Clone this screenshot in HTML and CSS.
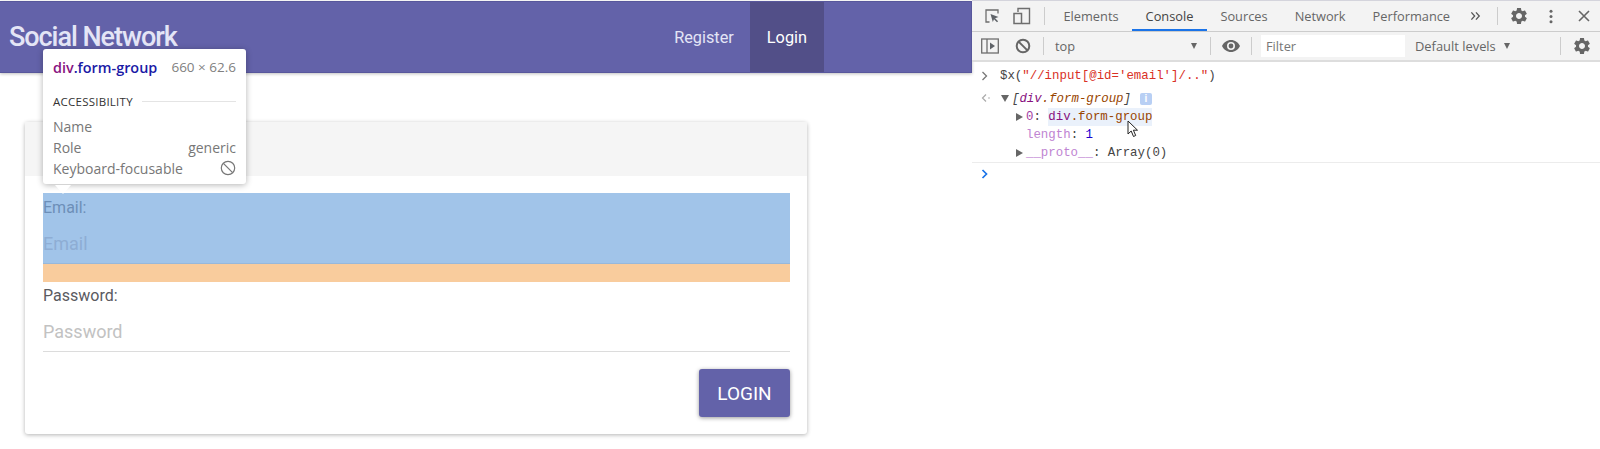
FILE: index.html
```html
<!DOCTYPE html>
<html lang="en">
<head>
<meta charset="utf-8">
<title>Social Network</title>
<link rel="stylesheet" href="styles.css">
</head>
<body>
<div class="screen">
  <main class="page">
    <header class="navbar">
      <div class="brand">Social Network</div>
      <nav class="nav">
        <a class="nav-link">Register</a>
        <a class="nav-link active">Login</a>
      </nav>
    </header>
    <section class="card">
      <div class="card-head"></div>
      <form class="card-body">
        <div class="form-group hl">
          <label class="label">Email:</label>
          <div class="input">Email</div>
        </div>
        <div class="hl-margin"></div>
        <div class="form-group pw">
          <label class="label">Password:</label>
          <div class="input underlined">Password</div>
        </div>
        <div class="actions"><button type="button" class="btn">LOGIN</button></div>
      </form>
    </section>
    <aside class="tip">
      <div class="tip-title"><span class="tip-name"><span class="t-tag">div</span><span class="t-cls">.form-group</span></span><span class="tip-size">660 × 62.6</span></div>
      <div class="tip-section"><span>ACCESSIBILITY</span><i class="tip-rule"></i></div>
      <div class="tip-row"><span>Name</span></div>
      <div class="tip-row"><span>Role</span><span>generic</span></div>
      <div class="tip-row"><span>Keyboard-focusable</span>
        <svg class="tip-icon" viewBox="0 0 16 16"><circle cx="8" cy="8" r="6.7" fill="none" stroke="#777" stroke-width="1.2"/><path d="M3.4 3.4l9.2 9.2" stroke="#777" stroke-width="1.2"/></svg>
      </div>
    </aside>
    <div class="tip-arrow"></div>
  </main>

  <section class="devtools">
    <div class="bar bar-tabs">
      <svg class="ic ic-inspect" viewBox="0 0 16 16"><path d="M5.5 14H2V2h12v3.5" fill="none" stroke="#6e6e6e" stroke-width="1.3"/><path d="M6.5 6l8 3-3.4 1.2 3 3-1.1 1.1-3-3L8.8 14z" fill="#5f6368"/></svg>
      <svg class="ic ic-device" viewBox="0 0 18 18"><path d="M5 5V1.5h11.5v15H9" fill="none" stroke="#6e6e6e" stroke-width="1.4"/><rect x="1" y="6.5" width="7.5" height="10" fill="none" stroke="#6e6e6e" stroke-width="1.5"/></svg>
      <i class="sep sep-a"></i>
      <div class="tabs">
        <span class="tab">Elements</span>
        <span class="tab selected">Console</span>
        <span class="tab">Sources</span>
        <span class="tab">Network</span>
        <span class="tab">Performance</span>
      </div>
      <svg class="ic ic-more" viewBox="0 0 12 10"><path d="M1.500 1l3.600 4-3.600 4M6.500 1l3.600 4-3.600 4" fill="none" stroke="#555" stroke-width="1.400"/></svg>
      <i class="sep sep-b"></i>
      <svg class="ic ic-gear" viewBox="0 0 24 24"><path fill="#666" d="M19.14 12.94c.04-.3.06-.61.06-.94 0-.32-.02-.64-.07-.94l2.03-1.58c.18-.14.23-.41.12-.61l-1.92-3.32c-.12-.22-.37-.29-.59-.22l-2.39.96c-.5-.38-1.03-.7-1.62-.94l-.36-2.54c-.04-.24-.24-.41-.48-.41h-3.84c-.24 0-.43.17-.47.41l-.36 2.54c-.59.24-1.13.57-1.62.94l-2.39-.96c-.22-.08-.47 0-.59.22L2.74 8.87c-.12.21-.08.47.12.61l2.03 1.58c-.05.3-.09.63-.09.94s.02.64.07.94l-2.03 1.58c-.18.14-.23.41-.12.61l1.92 3.32c.12.22.37.29.59.22l2.39-.96c.5.38 1.03.7 1.62.94l.36 2.54c.05.24.24.41.48.41h3.84c.24 0 .44-.17.47-.41l.36-2.54c.59-.24 1.13-.56 1.62-.94l2.39.96c.22.08.47 0 .59-.22l1.92-3.32c.12-.22.07-.47-.12-.61l-2.01-1.58zM12 15.6c-1.98 0-3.6-1.62-3.6-3.6s1.62-3.6 3.6-3.6 3.6 1.62 3.6 3.6-1.62 3.6-3.6 3.6z"/></svg>
      <svg class="ic ic-dots" viewBox="0 0 4 16"><circle cx="2" cy="2.500" r="1.600" fill="#666"/><circle cx="2" cy="8" r="1.600" fill="#666"/><circle cx="2" cy="13.500" r="1.600" fill="#666"/></svg>
      <svg class="ic ic-close" viewBox="0 0 12 12"><path d="M1 1l10 10M11 1L1 11" stroke="#666" stroke-width="1.600"/></svg>
    </div>
    <div class="bar bar-filter">
      <svg class="ic ic-panel" viewBox="0 0 18 16"><rect x=".7" y="1" width="16.6" height="14" fill="none" stroke="#6e6e6e" stroke-width="1.3"/><path d="M6 1v14" stroke="#6e6e6e" stroke-width="1.3"/><path d="M9 4.500L14 8l-5 3.500z" fill="#5f6368"/></svg>
      <svg class="ic ic-clear" viewBox="0 0 16 16"><circle cx="8" cy="8" r="6.300" fill="none" stroke="#666" stroke-width="2"/><path d="M3.600 3.600l8.800 8.800" stroke="#666" stroke-width="2"/></svg>
      <i class="sep sep-c"></i>
      <span class="context">top</span>
      <i class="caret caret-a"></i>
      <i class="sep sep-d"></i>
      <svg class="ic ic-eye" viewBox="0 0 18 12"><path fill="#666" d="M9 0C5 0 1.700 2.500 0 6c1.700 3.500 5 6 9 6s7.300-2.500 9-6c-1.700-3.500-5-6-9-6zm0 10a4 4 0 1 1 0-8 4 4 0 0 1 0 8zm0-6.400a2.400 2.400 0 1 0 0 4.800 2.400 2.400 0 0 0 0-4.800z"/></svg>
      <i class="sep sep-e"></i>
      <span class="filter">Filter</span>
      <span class="levels">Default levels</span>
      <i class="caret caret-b"></i>
      <i class="sep sep-f"></i>
      <svg class="ic ic-gear2" viewBox="0 0 24 24"><path fill="#666" d="M19.14 12.94c.04-.3.06-.61.06-.94 0-.32-.02-.64-.07-.94l2.03-1.58c.18-.14.23-.41.12-.61l-1.92-3.32c-.12-.22-.37-.29-.59-.22l-2.39.96c-.5-.38-1.03-.7-1.62-.94l-.36-2.54c-.04-.24-.24-.41-.48-.41h-3.84c-.24 0-.43.17-.47.41l-.36 2.54c-.59.24-1.13.57-1.62.94l-2.39-.96c-.22-.08-.47 0-.59.22L2.74 8.87c-.12.21-.08.47.12.61l2.03 1.58c-.05.3-.09.63-.09.94s.02.64.07.94l-2.03 1.58c-.18.14-.23.41-.12.61l1.92 3.32c.12.22.37.29.59.22l2.39-.96c.5.38 1.03.7 1.62.94l.36 2.54c.05.24.24.41.48.41h3.84c.24 0 .44-.17.47-.41l.36-2.54c.59-.24 1.13-.56 1.62-.94l2.39.96c.22.08.47 0 .59-.22l1.92-3.32c.12-.22.07-.47-.12-.61l-2.01-1.58zM12 15.6c-1.98 0-3.6-1.62-3.6-3.6s1.62-3.6 3.6-3.6 3.6 1.62 3.6 3.6-1.62 3.6-3.6 3.6z"/></svg>
    </div>
    <div class="console">
      <div class="msg">
        <svg class="gutter" viewBox="0 0 8 10"><path d="M1.500 1l4 4-4 4" fill="none" stroke="#777" stroke-width="1.300"/></svg>
        <code class="line l-0"><span class="c-plain">$x(</span><span class="c-str">"//input[@id='email']/.."</span><span class="c-plain">)</span></code>
      </div>
      <div class="msg m-result">
        <svg class="gutter" viewBox="0 0 10 10"><path d="M5 1.500L1.500 5 5 8.500" fill="none" stroke="#aaa" stroke-width="1.200"/><circle cx="8" cy="5" r=".8" fill="#aaa"/></svg>
        <i class="tri down"></i>
        <code class="line italic"><span class="c-plain">[</span><span class="c-tag">div</span><span class="c-cls">.form-group</span><span class="c-plain">]</span></code>
        <span class="info">i</span>
      </div>
      <div class="msg m-child">
        <i class="tri right"></i>
        <code class="line"><span class="c-key">0</span><span class="c-plain">: </span><span class="hover"><span class="c-tag">div</span><span class="c-cls">.form-group</span></span></code>
      </div>
      <div class="msg m-prop">
        <code class="line"><span class="c-dim">length</span><span class="c-plain">: </span><span class="c-num">1</span></code>
      </div>
      <div class="msg m-child">
        <i class="tri right"></i>
        <code class="line"><span class="c-dim">__proto__</span><span class="c-plain">: Array(0)</span></code>
      </div>
      <div class="prompt">
        <svg class="gutter" viewBox="0 0 8 10"><path d="M1.500 1l4 4-4 4" fill="none" stroke="#1a73e8" stroke-width="1.700"/></svg>
      </div>
    </div>
    <svg class="cursor" viewBox="0 0 12 18"><path d="M1 1v13l3.200-3 2.300 5.500 2.200-1-2.300-5.300H10.500z" fill="#fff" stroke="#222" stroke-width="1"/></svg>
  </section>
</div>
</body>
</html>
```

FILE: styles.css
```css
* { box-sizing: border-box; }
html, body { margin: 0; height: 449px; overflow: hidden; background: #fff; }
.screen { display: flex; height: 449px; }

/* page */
.page { position: relative; width: 972px; flex: none; padding-top: 1px; font-family: Roboto, "Liberation Sans", sans-serif; color: #5a5a5f; }
.navbar { height: 72px; border: 1px solid #58579c; border-left: 0; background: #6362a9; display: flex; justify-content: space-between; box-shadow: 0 1px 3px rgba(0,0,0,.25); padding-left: 9px; padding-right: 147px; }
.brand { font-size: 27px; font-weight: 500; letter-spacing: -1.05px; color: #e4e5f6; line-height: 71px; }
.nav { display: flex; }
.nav-link { font-size: 16.3px; line-height: 71px; padding: 0 17px; color: #e4e5f6; }
.nav-link:first-child { padding-right: 16px; }
.nav-link.active { background: #524f88; color: #fff; }

.card { margin: 49px 165px 0 25px; height: 312px; border-radius: 3px; background: #fff; box-shadow: 0 1px 4px rgba(0,0,0,.3); }
.card-head { height: 54px; background: #f5f5f5; }
.card-body { padding: 17px 17px 0 18px; }
.form-group { height: 71px; }
.hl { background: #a1c4e9; color: #6d8fb8; border-bottom: 1px solid #98b8da; }
.hl-margin { height: 18px; background: #f9cc9d; }
.label { display: block; font-size: 16px; line-height: 19px; padding-top: 5px; height: 32px; }
.input { font-size: 18px; line-height: 24px; color: #c2c2c2; height: 39px; padding-top: 7px; }
.hl .input { color: #8eadd4; }
.pw { height: 70px; }
.pw .label { padding-top: 4px; height: 31px; }
.underlined { border-bottom: 1px solid #dcdcdc; }
.actions { display: flex; justify-content: flex-end; margin-top: 17px; }
.btn { width: 91px; height: 48px; border: 0; border-radius: 3px; background: #6362a9; color: #fff; font: 400 19px Roboto, sans-serif; box-shadow: 0 1px 4px rgba(0,0,0,.4); }

/* tooltip */
.tip { position: absolute; left: 43px; top: 49px; width: 203px; height: 135px; background: #fff; border-radius: 3px; box-shadow: 0 1px 6px rgba(0,0,0,.3); padding: 0 10px; font-family: "Open Sans", "Noto Sans", sans-serif; font-size: 14px; color: #777; }
.tip-title { display: flex; justify-content: space-between; align-items: center; height: 36px; }
.tip-name { font-weight: 600; font-size: 14.4px; white-space: nowrap; }
.t-tag { color: #881280; }
.t-cls { color: #1a1aa6; }
.tip-size { font-size: 13.5px; color: #808080; white-space: nowrap; }
.tip-section { display: flex; align-items: center; height: 30px; gap: 9px; font-size: 11.5px; color: #333; letter-spacing: .25px; margin-top: 1px; }
.tip-rule { flex: 1; height: 1px; background: #e4e4e4; }
.tip-row { display: flex; justify-content: space-between; align-items: center; height: 21px; font-size: 14px; white-space: nowrap; }
.tip-icon { width: 16px; height: 16px; margin-top: -2px; }
.tip-arrow { position: absolute; left: 55px; top: 185px; width: 0; height: 0; border-left: 8.5px solid transparent; border-right: 8.5px solid transparent; border-top: 9px solid #fff; }

/* devtools */
.devtools { position: relative; flex: 1; min-width: 0; font-family: "Open Sans", "Noto Sans", sans-serif; color: #5f6368; font-size: 13px; }
.bar { display: flex; align-items: center; background: #f3f3f3; }
.bar-tabs { height: 32px; border-top: 1px solid #d4d4dc; border-bottom: 1px solid #ccc; padding-left: 12px; }
.bar-filter { height: 30px; border-bottom: 2px solid #ddd; padding-left: 9px; }
.ic { flex: none; display: block; }
.sep { flex: none; width: 1px; height: 18px; background: #ccc; }

.ic-inspect { width: 16px; height: 16px; }
.ic-device { width: 18px; height: 18px; margin-left: 13px; }
.sep-a { margin-left: 13px; }
.tabs { display: flex; align-self: stretch; margin-left: 5px; }
.tab { padding: 0 13.5px; line-height: 30px; font-size: 12.8px; color: #666; white-space: nowrap; }
.selected { color: #444; box-shadow: inset 0 -2px 0 #1a73e8; }
.ic-more { width: 11px; height: 10px; margin-left: 6px; }
.sep-b { margin-left: 16px; }
.ic-gear { width: 20px; height: 20px; margin-left: 11px; }
.ic-dots { width: 4px; height: 15px; margin-left: 20px; }
.ic-close { width: 12px; height: 12px; margin-left: 25px; }

.ic-panel { width: 18px; height: 16px; }
.ic-clear { width: 16px; height: 16px; margin-left: 16px; }
.sep-c { margin-left: 12px; }
.context { margin-left: 11px; width: 136px; font-size: 12.8px; color: #666; }
.caret { flex: none; width: 0; height: 0; border-left: 3.5px solid transparent; border-right: 3.5px solid transparent; border-top: 6px solid #666; }
.sep-d { margin-left: 13px; }
.ic-eye { width: 18px; height: 12px; margin-left: 11px; }
.sep-e { margin-left: 11px; }
.filter { margin-left: 9px; width: 144px; height: 22px; background: #fff; padding-left: 5px; line-height: 22px; font-size: 12.8px; color: #777; }
.levels { margin-left: 10px; width: 89px; font-size: 12.9px; color: #666; white-space: nowrap; }
.sep-f { margin-left: 50px; }
.ic-gear2 { width: 20px; height: 20px; margin-left: 11px; }

.console { padding-top: 5px; font-family: "Liberation Mono", "DejaVu Sans Mono", monospace; font-size: 12.4px; }
.msg { position: relative; height: 18px; display: flex; align-items: center; padding-left: 28px; }
.m-result { height: 23px; padding-left: 29px; padding-top: 4px; }
.m-child { padding-left: 44px; }
.m-prop { padding-left: 54px; }
.msg .gutter, .prompt .gutter { position: absolute; left: 9px; top: 4px; width: 8px; height: 10px; }
.m-result .gutter { left: 9px; top: 8px; width: 10px; height: 10px; }
.prompt { position: relative; height: 24px; border-top: 1px solid #ececec; }
.prompt .gutter { left: 9px; top: 6px; }
.line { font: inherit; white-space: pre; color: #444; }
.italic { font-style: italic; margin-left: 3px; }
.tri { flex: none; width: 0; height: 0; display: block; }
.tri.down { border-left: 4px solid transparent; border-right: 4px solid transparent; border-top: 7px solid #666; }
.tri.right { border-top: 4px solid transparent; border-bottom: 4px solid transparent; border-left: 7px solid #666; margin-right: 3px; }
.c-plain { color: #444; }
.c-str { color: #d93025; }
.c-tag { color: #881280; }
.c-cls { color: #994500; }
.c-key { color: #a23ca2; }
.c-dim { color: #c084d2; }
.c-num { color: #1c00cf; }
.hover { background: #eaf1fb; padding: 2px 0; }
.info { margin-left: 9px; width: 12px; height: 12px; border-radius: 2px; background: #b8cff4; color: #fff; font: bold 10px/12px "Liberation Sans", sans-serif; text-align: center; }
.cursor { position: absolute; left: 155px; top: 120px; width: 12px; height: 18px; }
```
